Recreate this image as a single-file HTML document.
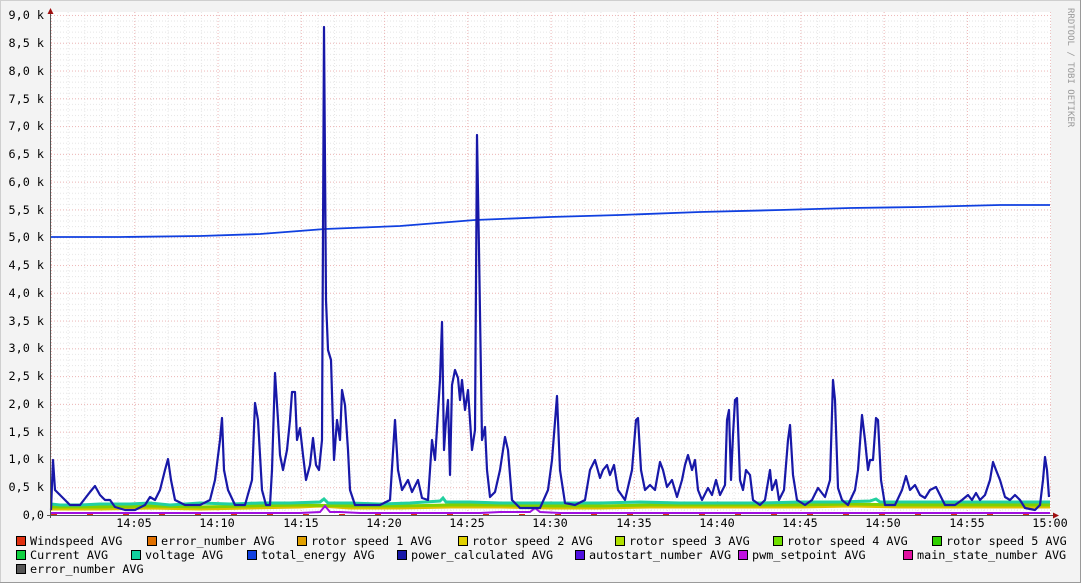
<!DOCTYPE html>
<html><head><meta charset="utf-8"><style>
html,body{margin:0;padding:0;background:#f3f3f3;}
svg{display:block;}
text{font-family:"DejaVu Sans Mono","Liberation Mono",monospace;font-size:11.8px;fill:#000;}
</style></head><body>
<svg width="1081" height="583" viewBox="0 0 1081 583" xmlns="http://www.w3.org/2000/svg">
<defs>
<pattern id="minv" x="51" y="0" width="16.65" height="583" patternUnits="userSpaceOnUse">
<line x1="0.5" y1="0" x2="0.5" y2="583" stroke="#e6e6e6" stroke-width="1" stroke-dasharray="1,2"/>
</pattern>
<pattern id="minh" x="0" y="515" width="1081" height="5.556" patternUnits="userSpaceOnUse">
<line x1="0" y1="0.5" x2="1081" y2="0.5" stroke="#e6e6e6" stroke-width="1" stroke-dasharray="1,2"/>
</pattern>
<pattern id="majv" x="51" y="0" width="83.27" height="583" patternUnits="userSpaceOnUse">
<line x1="0.5" y1="0" x2="0.5" y2="583" stroke="#efb8b8" stroke-width="1" stroke-dasharray="1,2"/>
</pattern>
<pattern id="majh" x="0" y="515" width="1081" height="27.78" patternUnits="userSpaceOnUse">
<line x1="0" y1="0.5" x2="1081" y2="0.5" stroke="#efb8b8" stroke-width="1" stroke-dasharray="1,2"/>
</pattern>
</defs>
<rect x="0" y="0" width="1081" height="583" fill="#f3f3f3"/>
<rect x="0.5" y="0.5" width="1080" height="582" fill="none" stroke="#cfcfcf"/>
<line x1="0" y1="582.5" x2="1081" y2="582.5" stroke="#9a9a9a"/>
<line x1="1080.5" y1="0" x2="1080.5" y2="583" stroke="#9a9a9a"/>
<rect x="51" y="12" width="1000" height="503" fill="#fff"/>
<rect x="51" y="12" width="1000" height="503" fill="url(#minv)"/>
<rect x="51" y="12" width="1000" height="503" fill="url(#minh)"/>
<rect x="51" y="12" width="1000" height="503" fill="url(#majv)"/>
<rect x="51" y="12" width="1000" height="503" fill="url(#majh)"/>

<g text-anchor="end">
<text x="44" y="19">9,0 k</text><text x="44" y="47">8,5 k</text><text x="44" y="75">8,0 k</text>
<text x="44" y="103">7,5 k</text><text x="44" y="130">7,0 k</text><text x="44" y="158">6,5 k</text>
<text x="44" y="186">6,0 k</text><text x="44" y="214">5,5 k</text><text x="44" y="241">5,0 k</text>
<text x="44" y="269">4,5 k</text><text x="44" y="297">4,0 k</text><text x="44" y="325">3,5 k</text>
<text x="44" y="352">3,0 k</text><text x="44" y="380">2,5 k</text><text x="44" y="408">2,0 k</text>
<text x="44" y="436">1,5 k</text><text x="44" y="463">1,0 k</text><text x="44" y="491">0,5 k</text>
<text x="44" y="519">0,0</text>
</g>
<g text-anchor="middle">
<text x="134" y="527">14:05</text><text x="217" y="527">14:10</text><text x="301" y="527">14:15</text>
<text x="384" y="527">14:20</text><text x="467" y="527">14:25</text><text x="550" y="527">14:30</text>
<text x="634" y="527">14:35</text><text x="717" y="527">14:40</text><text x="800" y="527">14:45</text>
<text x="883" y="527">14:50</text><text x="967" y="527">14:55</text><text x="1050" y="527">15:00</text>
</g>

<polyline fill="none" stroke="#e0c000" stroke-width="3" points="51,509 100,509 150,508 200,509 250,508 300,507 320,506 350,508 400,508 450,507 500,507 550,508 600,508 650,507 700,507 750,507 800,507 850,506 900,507 950,507 1000,507 1050,507"/>
<polyline fill="none" stroke="#7fd000" stroke-width="3" points="51,507 100,507 150,506 200,507 250,506 300,505 350,506 400,506 450,505 500,505 550,506 600,506 650,505 700,505 750,505 800,505 850,504 900,505 950,505 1000,505 1050,505"/>
<polyline fill="none" stroke="#22d0a0" stroke-width="3" points="51,504 60,505 80,505 100,504 130,504 150,503 170,505 200,503 230,504 260,503 290,503 320,502 324,499 328,503 350,503 380,504 410,503 440,501 443,498 446,502 470,502 500,503 530,503 560,503 600,503 640,502 680,503 720,503 760,503 800,502 840,502 870,501 876,499 880,502 920,502 960,502 1000,502 1050,502"/>
<polyline fill="none" stroke="#a010e0" stroke-width="2" points="51,513 100,513 150,513 200,513 250,513 300,513 320,512 325,506 330,512 340,512 360,513 400,513 450,513 480,513 500,512 530,512 535,508 540,512 560,513 600,513 650,513 700,513 750,513 800,513 850,513 900,513 950,513 1000,513 1050,513"/>
<line x1="51" y1="514.5" x2="1050" y2="514.5" stroke="#e03010" stroke-width="1" stroke-dasharray="6,30"/>

<polyline fill="none" stroke="#1040e0" stroke-width="1.8" points="51,237 120,237 200,236 260,234 325,229 400,226 475,220 550,217 620,215 700,212 780,210 850,208 920,207 1000,205 1050,205"/>

<polyline fill="none" stroke="#1818a8" stroke-width="2.2" stroke-linejoin="round" points="51,510 53,460 55,490 60,495 70,505 80,505 90,492 95,486 100,495 105,500 110,500 115,507 125,510 135,510 145,505 150,497 155,500 160,490 165,470 168,459 171,480 175,500 185,505 200,505 210,500 215,480 220,440 222,418 224,470 228,490 235,505 245,505 252,480 255,403 258,420 262,490 266,505 270,505 272,470 275,373 278,420 280,455 283,470 287,450 290,420 292,392 295,392 297,440 300,428 303,455 306,480 310,465 313,438 316,465 319,470 322,440 324,27 326,300 328,350 331,360 334,460 337,420 340,440 342,390 345,405 348,450 350,490 355,505 365,505 380,505 390,500 395,420 398,470 402,490 408,480 412,492 418,480 422,498 428,500 432,440 435,460 440,380 442,322 444,450 446,420 448,400 450,475 452,385 455,370 458,378 460,400 462,380 465,410 468,390 470,420 472,450 475,430 477,135 479,250 482,440 485,427 487,470 490,497 495,492 500,470 505,437 508,450 512,500 520,508 540,508 548,490 552,460 557,396 560,470 565,503 575,505 585,500 590,470 595,460 600,478 603,470 607,465 610,475 614,465 618,490 625,500 632,470 636,420 638,418 641,470 645,490 650,485 655,490 660,462 663,470 667,487 672,480 677,497 682,480 685,465 688,455 692,470 695,460 698,490 702,500 708,488 712,495 716,480 720,495 725,485 727,420 729,410 731,480 733,435 735,400 737,398 740,480 743,490 746,470 750,475 753,500 760,505 765,500 770,470 772,490 776,480 779,500 784,490 788,440 790,425 793,475 797,500 805,505 812,500 818,488 825,497 830,480 833,380 835,400 838,488 842,500 848,505 855,490 858,470 862,415 865,440 868,470 870,460 873,460 876,418 878,420 881,480 885,505 895,505 902,490 906,476 910,490 915,485 920,495 925,498 930,490 936,487 940,495 945,505 955,505 962,500 968,495 972,500 976,493 980,500 985,495 990,480 993,462 996,470 1000,480 1005,497 1010,500 1015,495 1020,500 1025,508 1035,510 1040,505 1043,480 1045,457 1047,470 1049,497"/>

<line x1="50.5" y1="12" x2="50.5" y2="518" stroke="#555"/>
<line x1="47" y1="515.5" x2="1056" y2="515.5" stroke="#555"/>
<polygon points="50.5,8 47.5,14 53.5,14" fill="#a01010"/>
<polygon points="1059,515.5 1053,512.5 1053,518.5" fill="#a01010"/>

<text x="1068" y="8" transform="rotate(90 1068 8)" style="font-size:9px;fill:#999">RRDTOOL / TOBI OETIKER</text>

<g stroke="#000" stroke-width="1">
<rect x="16.5" y="536.5" width="9" height="9" fill="#e03010"/>
<rect x="147.5" y="536.5" width="9" height="9" fill="#e07000"/>
<rect x="297.5" y="536.5" width="9" height="9" fill="#e0a000"/>
<rect x="458.5" y="536.5" width="9" height="9" fill="#e0d000"/>
<rect x="615.5" y="536.5" width="9" height="9" fill="#b0e000"/>
<rect x="773.5" y="536.5" width="9" height="9" fill="#70e000"/>
<rect x="932.5" y="536.5" width="9" height="9" fill="#30d000"/>
<rect x="16.5" y="550.5" width="9" height="9" fill="#10d040"/>
<rect x="131.5" y="550.5" width="9" height="9" fill="#10d0a0"/>
<rect x="247.5" y="550.5" width="9" height="9" fill="#1040e0"/>
<rect x="397.5" y="550.5" width="9" height="9" fill="#1818a8"/>
<rect x="575.5" y="550.5" width="9" height="9" fill="#5010e0"/>
<rect x="738.5" y="550.5" width="9" height="9" fill="#c010e0"/>
<rect x="903.5" y="550.5" width="9" height="9" fill="#e010a0"/>
<rect x="16.5" y="564.5" width="9" height="9" fill="#555"/>
</g>
<text x="30" y="545">Windspeed AVG</text>
<text x="161" y="545">error_number AVG</text>
<text x="311" y="545">rotor speed 1 AVG</text>
<text x="472" y="545">rotor speed 2 AVG</text>
<text x="629" y="545">rotor speed 3 AVG</text>
<text x="787" y="545">rotor speed 4 AVG</text>
<text x="946" y="545">rotor speed 5 AVG</text>
<text x="30" y="559">Current AVG</text>
<text x="145" y="559">voltage AVG</text>
<text x="261" y="559">total_energy AVG</text>
<text x="411" y="559">power_calculated AVG</text>
<text x="589" y="559">autostart_number AVG</text>
<text x="752" y="559">pwm_setpoint AVG</text>
<text x="917" y="559">main_state_number AVG</text>
<text x="30" y="573">error_number AVG</text>
</svg>
</body></html>
